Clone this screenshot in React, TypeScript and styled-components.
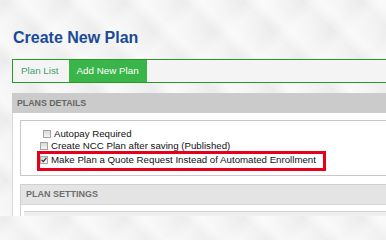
import React from "react";
import styled, { createGlobalStyle } from "styled-components";

const GlobalStyle = createGlobalStyle`
    html, body {
        margin: 0;
        padding: 0;
        height: 216px;
        overflow: hidden;
    }

    body {
        font-family: "Liberation Sans", Arial, sans-serif;
        background-color: #f3f3f3;
        background-image:
            repeating-linear-gradient(45deg, rgba(255, 255, 255, 0.6) 0px, rgba(255, 255, 255, 0) 30px, rgba(255, 255, 255, 0.6) 42px),
            repeating-linear-gradient(-45deg, rgba(228, 228, 228, 0.5) 0px, rgba(228, 228, 228, 0) 30px, rgba(228, 228, 228, 0.5) 42px);
    }
`;

const Page = styled.div`
    width: 386px;
    height: 216px;
    box-sizing: border-box;
    padding: 28px 0 0 12px;
    overflow: hidden;
`;

const Title = styled.h1`
    margin: 0 0 11px 1px;
    font-size: 16px;
    line-height: 20px;
    font-weight: bold;
    color: #1a4a98;
`;

const TabBar = styled.div`
    display: flex;
    height: 22px;
    border: 1px solid #239b23;
    border-right: 0;
    background: #f4f4f4;
`;

const Tab = styled.div<{ $active?: boolean }>`
    padding: ${(p) => (p.$active ? "0 8px" : "0 10px 0 8px")};
    line-height: 22px;
    font-size: 9.8px;
    color: ${(p) => (p.$active ? "#ffffff" : "#3f9f6b")};
    background: ${(p) => (p.$active ? "#3ab54a" : "transparent")};
    cursor: pointer;
`;

const SectionHeader = styled.div`
    margin-top: 10px;
    height: 20px;
    padding-left: 5px;
    background: #cbcbcb;
    font-size: 8.8px;
    line-height: 20px;
    font-weight: bold;
    color: #666666;
`;

const Panel = styled.div`
    background: #ffffff;
    border-left: 1px solid #d8d8d8;
    padding: 7px 0 0 7px;
    height: 120px;
`;

const OptionsBox = styled.div`
    border: 1px solid #c8c8c8;
    border-right: 0;
    padding: 7px 0 4px 0;
    display: flex;
    flex-direction: column;
    align-items: flex-start;
`;

const Row = styled.label<{ $indent?: number; $height?: number }>`
    display: flex;
    align-items: center;
    gap: 3px;
    height: ${(p) => p.$height ?? 12}px;
    padding-left: ${(p) => p.$indent ?? 0}px;
    font-size: 9.7px;
    line-height: 12px;
    color: #111111;
    white-space: nowrap;
`;

const Highlight = styled.div`
    margin-left: 16px;
    border: 3px solid #e8001a;
    padding: 0 7px 2px 0;
`;

const Box = styled.span`
    display: inline-flex;
    align-items: center;
    justify-content: center;
    box-sizing: border-box;
    width: 8px;
    height: 8px;
    border: 1px solid #a4a4a4;
    background: linear-gradient(#d8d8d8, #f4f4f4);
    flex-shrink: 0;
`;

const SettingsBox = styled.div`
    margin-top: 8px;
    border: 1px solid #cfcfcf;
    border-right: 0;
`;

const SettingsHeader = styled.div`
    height: 19px;
    padding-left: 5px;
    background: #e4e4e4;
    border-bottom: 1px solid #d6d6d6;
    font-size: 9px;
    line-height: 19px;
    font-weight: bold;
    color: #6e6e6e;
`;

const SettingsBody = styled.div`
    background: #ffffff;
    padding: 6px 0 0 3px;
`;

const SettingsBar = styled.div`
    height: 20px;
    background: #efefef;
    border-top: 1px solid #d2d2d2;
`;

const Checkbox = ({ checked }: { checked?: boolean }) => (
    <Box>
        {checked && (
            <svg width="6" height="6" viewBox="0 0 6 6">
                <path d="M0.6 3 L2.3 4.7 L5.4 0.8" fill="none" stroke="#333333" strokeWidth="1.2" />
            </svg>
        )}
    </Box>
);

const App = () => {
    return (
        <Page>
            <GlobalStyle />
            <Title>Create New Plan</Title>
            <TabBar>
                <Tab>Plan List</Tab>
                <Tab $active>Add New Plan</Tab>
            </TabBar>
            <SectionHeader>PLANS DETAILS</SectionHeader>
            <Panel>
                <OptionsBox>
                    <Row $indent={22}>
                        <Checkbox />
                        Autopay Required
                    </Row>
                    <Row $indent={19} $height={11}>
                        <Checkbox />
                        Create NCC Plan after saving (Published)
                    </Row>
                    <Highlight>
                        <Row>
                            <Checkbox checked />
                            Make Plan a Quote Request Instead of Automated Enrollment
                        </Row>
                    </Highlight>
                </OptionsBox>
                <SettingsBox>
                    <SettingsHeader>PLAN SETTINGS</SettingsHeader>
                    <SettingsBody>
                        <SettingsBar />
                    </SettingsBody>
                </SettingsBox>
            </Panel>
        </Page>
    );
};

export default App;
